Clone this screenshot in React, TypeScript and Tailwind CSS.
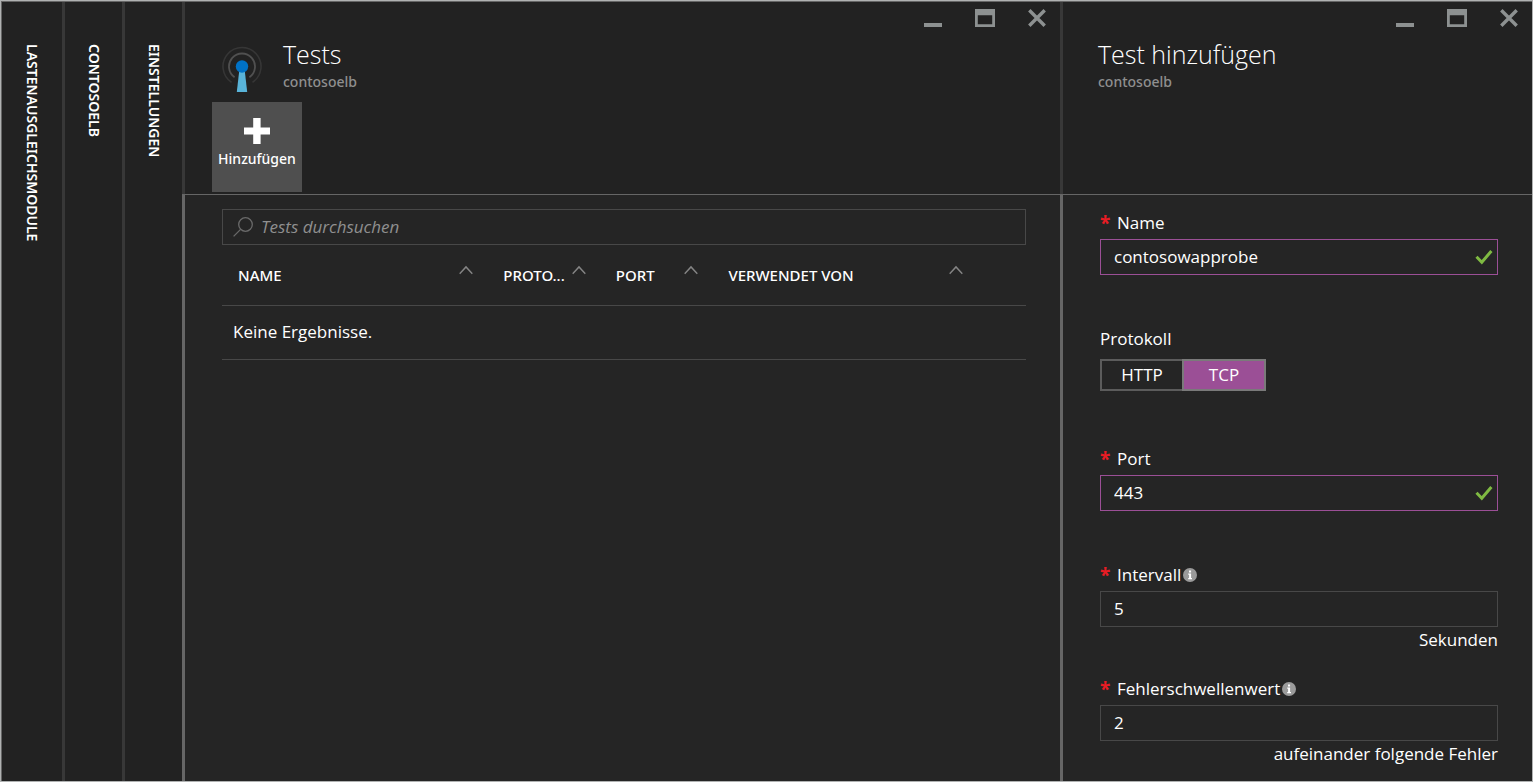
import { useState } from "react";
import type { ReactNode } from "react";

function WindowControls() {
  return (
    <div className="flex justify-end gap-8 pt-[6px] pr-[13px] text-[#8d9191]">
      <button type="button" aria-label="Minimieren" className="size-5">
        <svg viewBox="0 0 20 20" className="size-5" fill="currentColor">
          <rect x="1" y="15" width="18" height="4" />
        </svg>
      </button>
      <button type="button" aria-label="Maximieren" className="size-5">
        <svg viewBox="0 0 20 20" className="size-5" fill="currentColor" fillRule="evenodd">
          <path d="M0 1h20v18H0zM2.8 7.2v9h14.4v-9z" />
        </svg>
      </button>
      <button type="button" aria-label="Schließen" className="size-5">
        <svg viewBox="0 0 20 20" className="size-5" fill="none" stroke="currentColor" strokeWidth="3.4">
          <path d="M2.3 2.3l15.4 15.4M17.7 2.3L2.3 17.7" />
        </svg>
      </button>
    </div>
  );
}

function Rail({ children, first = false }: { children: ReactNode; first?: boolean }) {
  return (
    <div
      className={
        first
          ? "flex w-[60px] shrink-0 justify-center bg-[#222222] pt-[42px]"
          : "flex w-[60px] shrink-0 justify-center border-l-3 border-[#383838] bg-[#222222] pt-[42px]"
      }
    >
      <a
        href="#"
        className="font-['Noto_Sans',sans-serif] text-[14px] leading-5 font-semibold whitespace-nowrap [writing-mode:vertical-rl]"
      >
        {children}
      </a>
    </div>
  );
}

function ProbeIcon() {
  return (
    <svg viewBox="0 0 40 48" className="h-12 w-10" fill="none" aria-hidden="true">
      <path d="M9.5 36.3A19 19 0 1 1 30.5 36.3" stroke="#363636" strokeWidth="1.6" />
      <path d="M12.6 31.2A13 13 0 1 1 27.4 31.2" stroke="#505050" strokeWidth="1.8" />
      <path d="M17.2 25h5.6l2.4 21H14.8z" fill="#59b4d9" />
      <circle cx="20" cy="20.5" r="6.2" fill="#0072c6" />
    </svg>
  );
}

function SortHeader({ label }: { label: string }) {
  return (
    <th scope="col" className="h-15 p-0 font-medium">
      <button type="button" className="flex w-full items-center justify-between pr-[14px] pl-4">
        <span className="leading-5 whitespace-nowrap">{label}</span>
        <svg viewBox="0 0 14 20" className="h-5 w-[14px] shrink-0" fill="none" stroke="#858585" strokeWidth="1.4">
          <path d="M.7 8.7L7 1.9l6.3 6.8" />
        </svg>
      </button>
    </th>
  );
}

function InfoIcon() {
  return (
    <svg viewBox="0 0 14 14" className="size-[14px]" aria-hidden="true">
      <circle cx="7" cy="7" r="7" fill="#9b9b9b" />
      <path d="M6 2.6h2.1v1.9H6zM5.2 5.6h2.9v4.4h.9v1.2H5.2V10h.9V6.8h-.9z" fill="#fff" />
    </svg>
  );
}

function Field({
  id,
  label,
  initial,
  valid = false,
  info = false,
  hint,
}: {
  id: string;
  label: string;
  initial: string;
  valid?: boolean;
  info?: boolean;
  hint?: string;
}) {
  const [value, setValue] = useState(initial);
  return (
    <div>
      <div className="mb-1 flex items-center">
        <span className="w-[17px] text-[19px] leading-6 font-bold text-[#e81c24]">*</span>
        <label htmlFor={id} className="leading-6">
          {label}
        </label>
        {info && (
          <span className="ml-[2px]">
            <InfoIcon />
          </span>
        )}
      </div>
      <div
        className={
          valid
            ? "flex h-9 items-center border border-[#9b4f96] pr-1"
            : "flex h-9 items-center border border-[#484848] pr-1"
        }
      >
        <input
          id={id}
          value={value}
          onChange={(e) => setValue(e.target.value)}
          className="min-w-0 flex-1 bg-transparent pl-[13px] outline-none"
        />
        {valid && (
          <svg viewBox="0 0 18 16" className="h-4 w-[18px]" fill="none" stroke="#7fba42" strokeWidth="3">
            <path d="M1.5 7.8l5.3 5.4L16.4 2" />
          </svg>
        )}
      </div>
      {hint && <p className="text-right leading-[26px]">{hint}</p>}
    </div>
  );
}

export default function App() {
  const [protocol, setProtocol] = useState("TCP");
  return (
    <div className="flex min-h-screen border border-[#b0b2b2] bg-[#666] pt-px pl-px font-['Open_Sans',sans-serif] text-[17px] text-white">
      <Rail first>LASTENAUSGLEICHSMODULE</Rail>
      <Rail>CONTOSOELB</Rail>
      <Rail>EINSTELLUNGEN</Rail>

      <main className="flex min-w-0 flex-1 flex-col">
        <header className="h-[193px] border-b border-[#666] bg-[#222222]">
          <div className="h-full border-l-3 border-[#383838]">
            <WindowControls />
            <div className="flex gap-[21px] pt-[18px] pl-[37px]">
              <ProbeIcon />
              <div className="-mt-2">
                <h1 className="text-[25px] leading-8 font-light">Tests</h1>
                <p className="font-['Noto_Sans',sans-serif] text-[14px] leading-6 font-medium text-[#8f8f8f]">
                  contosoelb
                </p>
              </div>
            </div>
            <button
              type="button"
              className="mt-2 ml-[27px] flex h-[90px] w-[90px] flex-col items-center gap-[3px] bg-[#4f4f4f] pt-4 font-['Noto_Sans',sans-serif] text-[14px] leading-6 font-medium"
            >
              <svg viewBox="0 0 26 26" className="size-[26px]" fill="#fff" aria-hidden="true">
                <path d="M9.2 0h7.4v9.4H26v7.2h-9.4V26H9.2v-9.4H0V9.4h9.2z" />
              </svg>
              Hinzufügen
            </button>
          </div>
        </header>
        <section className="flex-1 border-l-3 border-[#666] bg-[#252525] pt-[14px] pr-[34px] pl-[37px]">
          <label className="flex h-9 items-center border border-[#484848] pl-[10px]">
            <svg viewBox="0 0 20 20" className="size-5 shrink-0" fill="none" stroke="#6a6a6a" strokeWidth="1.3">
              <circle cx="12.5" cy="7.5" r="6.8" />
              <path d="M7.6 12.4L.6 19.4" />
            </svg>
            <input
              type="text"
              aria-label="Tests durchsuchen"
              placeholder="Tests durchsuchen"
              className="min-w-0 flex-1 bg-transparent pl-2 italic outline-none placeholder:text-[#8f8f8f]"
            />
          </label>
          <table className="w-full table-fixed text-left">
            <colgroup>
              <col className="w-[33%]" />
              <col className="w-[14%]" />
              <col className="w-[14%]" />
              <col />
              <col className="w-[49px]" />
            </colgroup>
            <thead className="font-['Noto_Sans',sans-serif] text-[15px]">
              <tr className="border-b border-[#484848]">
                <SortHeader label="NAME" />
                <SortHeader label="PROTO..." />
                <SortHeader label="PORT" />
                <SortHeader label="VERWENDET VON" />
                <td />
              </tr>
            </thead>
            <tbody>
              <tr className="border-b border-[#484848]">
                <td colSpan={5} className="h-[54px] p-0 pl-[11px]">
                  Keine Ergebnisse.
                </td>
              </tr>
            </tbody>
          </table>
        </section>
      </main>

      <aside className="flex w-[472px] shrink-0 flex-col">
        <header className="h-[193px] border-b border-[#666] bg-[#222222]">
          <div className="h-full border-l-3 border-[#383838]">
            <WindowControls />
            <div className="pt-[10px] pl-[35px]">
              <h2 className="text-[25px] leading-8 font-light">Test hinzufügen</h2>
              <p className="font-['Noto_Sans',sans-serif] text-[14px] leading-6 font-medium text-[#8f8f8f]">
                contosoelb
              </p>
            </div>
          </div>
        </header>
        <form className="flex flex-1 flex-col border-l-3 border-[#666] bg-[#252525] pt-4 pr-[34px] pb-[14px] pl-[37px]">
          <Field id="name" label="Name" initial="contosowapprobe" valid />
          <fieldset className="mt-13 mb-14">
            <legend className="mb-2 leading-6">Protokoll</legend>
            <div className="flex w-[166px]">
              {["HTTP", "TCP"].map((p) => (
                <button
                  key={p}
                  type="button"
                  aria-pressed={protocol === p}
                  onClick={() => setProtocol(p)}
                  className={
                    protocol === p
                      ? "h-8 flex-1 border-2 border-[#7a7a7a] bg-[#9b4f96] leading-6"
                      : "h-8 flex-1 border-2 border-[#5c5c5c] leading-6 first:border-r-0 last:border-l-0"
                  }
                >
                  {p}
                </button>
              ))}
            </div>
          </fieldset>
          <Field id="port" label="Port" initial="443" valid />
          <div className="mt-13 flex flex-col gap-6">
            <Field id="interval" label="Intervall" initial="5" info hint="Sekunden" />
            <Field id="threshold" label="Fehlerschwellenwert" initial="2" info hint="aufeinander folgende Fehler" />
          </div>
        </form>
      </aside>
    </div>
  );
}
